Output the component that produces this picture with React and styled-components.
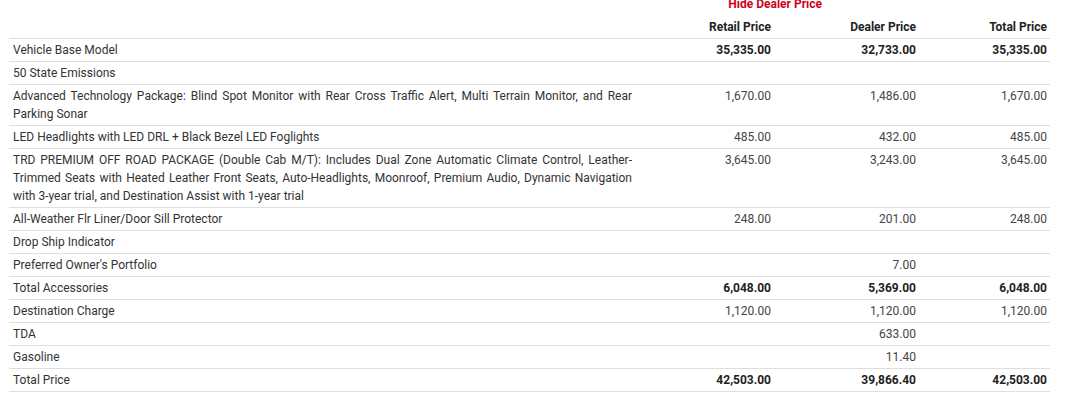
import React from 'react'
import styled, { createGlobalStyle } from 'styled-components'

const GlobalStyle = createGlobalStyle`
  body {
    margin: 0;
    background: #fff;
    font-family: Roboto, 'Liberation Sans', sans-serif;
    color: #333;
  }
`

const Page = styled.div`
  padding: 0 22px 0 9px;
  overflow: hidden;
  height: 397px;
`

const TopBar = styled.div`
  display: flex;
  justify-content: flex-end;
  margin-top: -5px;
  padding-right: 228px;
  height: 21px;
`

const ToggleLink = styled.a`
  font-size: 12px;
  line-height: 18px;
  font-weight: bold;
  color: #d0021b;
  cursor: pointer;
`

const Table = styled.table`
  width: 100%;
  border-collapse: collapse;
  table-layout: fixed;
  font-size: 12px;

  th, td {
    box-sizing: border-box;
  }
`

const HeadCell = styled.th`
  text-align: right;
  font-weight: bold;
  color: #222;
  line-height: 18px;
  padding: 2px 3px 2px 4px;
  border-bottom: 1px solid #dedede;
  width: ${p => p.$w || 'auto'};
`

const Row = styled.tr`
  border-bottom: 1px solid #dedede;
`

const Desc = styled.td`
  line-height: 18px;
  padding: 2px 8px 2px 4px;
  text-align: justify;
  vertical-align: top;
  color: #333;
`

const Amount = styled.td`
  line-height: 18px;
  padding: 2px 3px 2px 4px;
  text-align: right;
  vertical-align: top;
  font-weight: ${p => (p.$bold ? 'bold' : 'normal')};
  color: ${p => (p.$bold ? '#222' : '#444')};
`

const rows = [
  { label: 'Vehicle Base Model', r: '35,335.00', d: '32,733.00', t: '35,335.00', bold: true },
  { label: '50 State Emissions' },
  {
    label:
      'Advanced Technology Package: Blind Spot Monitor with Rear Cross Traffic Alert, Multi Terrain Monitor, and Rear Parking Sonar',
    r: '1,670.00', d: '1,486.00', t: '1,670.00',
  },
  { label: 'LED Headlights with LED DRL + Black Bezel LED Foglights', r: '485.00', d: '432.00', t: '485.00' },
  {
    label:
      'TRD PREMIUM OFF ROAD PACKAGE (Double Cab M/T): Includes Dual Zone Automatic Climate Control, Leather-Trimmed Seats with Heated Leather Front Seats, Auto-Headlights, Moonroof, Premium Audio, Dynamic Navigation with 3-year trial, and Destination Assist with 1-year trial',
    r: '3,645.00', d: '3,243.00', t: '3,645.00',
  },
  { label: 'All-Weather Flr Liner/Door Sill Protector', r: '248.00', d: '201.00', t: '248.00' },
  { label: 'Drop Ship Indicator' },
  { label: "Preferred Owner's Portfolio", d: '7.00' },
  { label: 'Total Accessories', r: '6,048.00', d: '5,369.00', t: '6,048.00', bold: true },
  { label: 'Destination Charge', r: '1,120.00', d: '1,120.00', t: '1,120.00' },
  { label: 'TDA', d: '633.00' },
  { label: 'Gasoline', d: '11.40' },
  { label: 'Total Price', r: '42,503.00', d: '39,866.40', t: '42,503.00', bold: true },
]

export default function App() {
  return (
    <>
      <GlobalStyle />
      <Page>
        <TopBar>
          <ToggleLink>Hide Dealer Price</ToggleLink>
        </TopBar>
        <Table>
          <thead>
            <tr>
              <HeadCell />
              <HeadCell $w="134px">Retail Price</HeadCell>
              <HeadCell $w="145px">Dealer Price</HeadCell>
              <HeadCell $w="131px">Total Price</HeadCell>
            </tr>
          </thead>
          <tbody>
            {rows.map((row, i) => (
              <Row key={i}>
                <Desc>{row.label}</Desc>
                <Amount $bold={row.bold}>{row.r}</Amount>
                <Amount $bold={row.bold}>{row.d}</Amount>
                <Amount $bold={row.bold}>{row.t}</Amount>
              </Row>
            ))}
          </tbody>
        </Table>
      </Page>
    </>
  )
}
